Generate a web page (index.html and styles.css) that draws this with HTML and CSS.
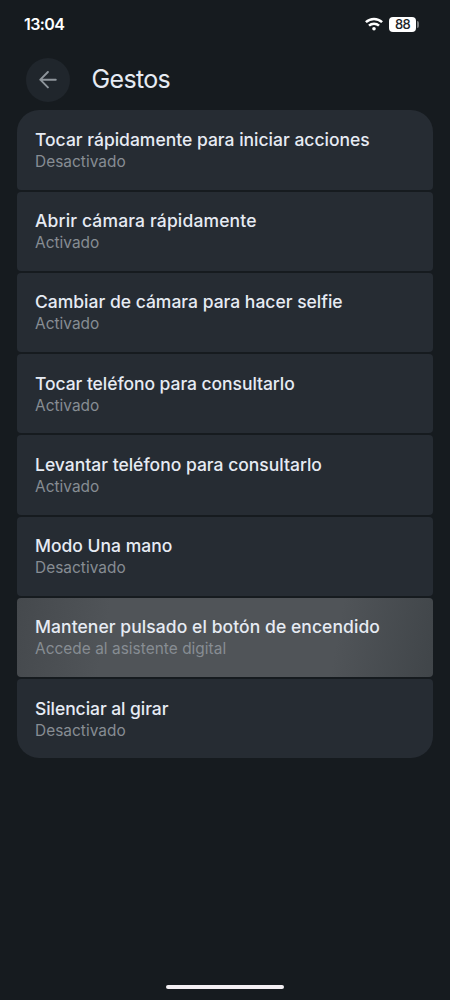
FILE: index.html
```html
<!DOCTYPE html>
<html lang="es">
<head>
<meta charset="utf-8">
<meta name="viewport" content="width=device-width">
<title>Gestos</title>
<link rel="stylesheet" href="styles.css">
</head>
<body>
<div class="status">
  <span class="clock">13:04</span>
  <div class="indicators">
    <svg class="wifi" viewBox="0 0 18 14" fill="none" stroke="#fff" stroke-width="2.5"><path d="M.9 5.2a11.8 11.8 0 0 1 16.2 0"/><path d="M4 8.7a7.4 7.4 0 0 1 10 0"/><circle cx="9" cy="11.8" r="1.8" fill="#fff" stroke="none"/></svg>
    <div class="battery"><span class="level">88</span><i class="cap"></i></div>
  </div>
</div>
<header class="header">
  <button class="back" aria-label="Atrás"><svg viewBox="0 0 18 18" fill="none" stroke="#8e959b" stroke-width="1.9" stroke-linecap="round" stroke-linejoin="round"><path d="M16.8 8.7H1.3M8.9 1 1.3 8.7l7.6 7.7"/></svg></button>
  <h1 class="heading">Gestos</h1>
</header>
<main class="list">
  <section class="card"><h2 class="title">Tocar rápidamente para iniciar acciones</h2><p class="state">Desactivado</p></section>
  <section class="card"><h2 class="title loose">Abrir cámara rápidamente</h2><p class="state">Activado</p></section>
  <section class="card"><h2 class="title">Cambiar de cámara para hacer selfie</h2><p class="state">Activado</p></section>
  <section class="card"><h2 class="title tight">Tocar teléfono para consultarlo</h2><p class="state">Activado</p></section>
  <section class="card"><h2 class="title">Levantar teléfono para consultarlo</h2><p class="state">Activado</p></section>
  <section class="card"><h2 class="title">Modo Una mano</h2><p class="state">Desactivado</p></section>
  <section class="card pressed"><h2 class="title wide">Mantener pulsado el botón de encendido</h2><p class="state">Accede al asistente digital</p></section>
  <section class="card"><h2 class="title tight">Silenciar al girar</h2><p class="state">Desactivado</p></section>
</main>
<div class="home"></div>
</body>
</html>
```
FILE: styles.css
```css
* { box-sizing: border-box; }
body {
  margin: 0;
  height: 1000px;
  display: flex;
  flex-direction: column;
  background: #161b1f;
  color: #e6ebf3;
  font-family: Inter, "Liberation Sans", sans-serif;
  overflow: hidden;
}
h1, h2, p { margin: 0; }
.status {
  height: 48px;
  padding: 0 31px 0 24px;
  display: flex;
  align-items: center;
  justify-content: space-between;
  color: #fff;
}
.clock { font-size: 16px; font-weight: 600; letter-spacing: -0.6px; }
.indicators { display: flex; align-items: center; gap: 6px; }
.wifi { width: 18px; height: 14px; }
.battery { display: flex; align-items: center; gap: 1px; }
.level {
  width: 27px;
  height: 15px;
  border-radius: 4px;
  background: #fff;
  color: #202428;
  font-size: 13px;
  line-height: 15px;
  font-weight: 500;
  letter-spacing: -0.6px;
  text-align: center;
}
.cap { width: 2px; height: 7px; border-radius: 0 2px 2px 0; background: #777b7e; }
.header {
  height: 62.3px;
  padding: 9.7px 26px 0;
  display: flex;
  align-items: flex-start;
  gap: 21.5px;
}
.back {
  width: 44px;
  height: 44px;
  padding: 0;
  border: 0;
  border-radius: 50%;
  background: #20262c;
  display: grid;
  place-items: center;
}
.back svg { width: 18px; height: 18px; }
.heading { font-size: 25px; line-height: 43px; font-weight: 400; letter-spacing: -0.65px; }
.list { padding: 0 17.3px; display: flex; flex-direction: column; gap: 2px; }
.card {
  height: 79.25px;
  padding: 18.7px 17.7px 0;
  border-radius: 4px;
  background: #262c33;
}
.card:first-child { border-radius: 22px 22px 4px 4px; }
.card:last-child { border-radius: 4px 4px 22px 22px; }
.pressed { background: linear-gradient(100deg, #45494d 0%, #505458 22%, #505458 76%, #404549 100%); }
.title { font-size: 17.5px; line-height: 22px; font-weight: 500; white-space: nowrap; }
.title.loose { letter-spacing: 0.15px; }
.title.wide { letter-spacing: 0.07px; }
.title.tight { letter-spacing: -0.06px; }
.state { font-size: 15.4px; line-height: 22px; letter-spacing: 0.04px; color: #878d93; white-space: nowrap; }
.home {
  width: 118px;
  height: 4px;
  margin: auto auto 11px;
  border-radius: 2px;
  background: #f3eff3;
}
```
